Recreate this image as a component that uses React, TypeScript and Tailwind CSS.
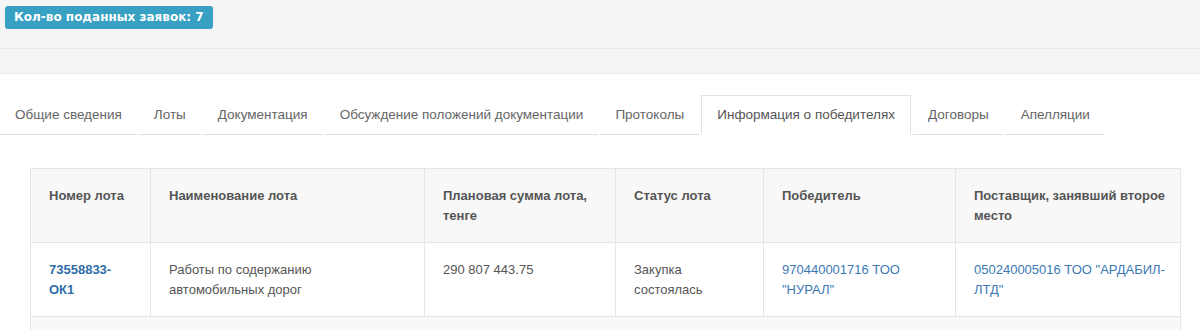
import React from "react";

const tabs = [
  "Общие сведения",
  "Лоты",
  "Документация",
  "Обсуждение положений документации",
  "Протоколы",
  "Информация о победителях",
  "Договоры",
  "Апелляции",
];

export default function App() {
  const active = 5;
  return (
    <div className="w-[1200px] h-[330px] overflow-hidden bg-white font-['Liberation_Sans',Arial,sans-serif] text-[13px] text-[#555]">
      <div className="h-[49px] bg-[#f5f5f5] border-b border-[#e8e8e8] pl-[5px] pt-[6px]">
        <span className="inline-block rounded-[3px] bg-[#37a0c3] px-[9px] h-[23px] leading-[23px] text-white font-bold text-[12px] font-['DejaVu_Sans',Verdana,sans-serif]">
          Кол-во поданных заявок: 7
        </span>
      </div>
      <div className="h-[25px] bg-[#f5f5f5] border-b border-[#ececec]" />
      <div className="pt-[21px]">
        <ul className="flex">
          {tabs.map((t, i) => (
            <li key={t} className="mr-[2px]">
              <span
                className={
                  i === active
                    ? "block px-[15px] py-[10px] leading-[18px] text-[13.5px] border border-[#e2e2e2] border-b-transparent bg-white text-[#555]"
                    : "block px-[15px] pt-[11px] pb-[10px] leading-[18px] text-[13.5px] border-b border-[#e0e0e0] text-[#666]"
                }
              >
                {t}
              </span>
            </li>
          ))}
        </ul>
      </div>
      <div className="pl-[30px] pr-[20px] pt-[33px]">
        <table className="w-[1150px] border-collapse table-fixed">
          <colgroup>
            <col className="w-[120px]" />
            <col className="w-[274px]" />
            <col className="w-[191px]" />
            <col className="w-[148px]" />
            <col className="w-[192px]" />
            <col className="w-[225px]" />
          </colgroup>
          <thead>
            <tr className="bg-[#f8f8f8]">
              {[
                "Номер лота",
                "Наименование лота",
                "Плановая сумма лота, тенге",
                "Статус лота",
                "Победитель",
                "Поставщик, занявший второе место",
              ].map((h) => (
                <th
                  key={h}
                  className="border border-[#e6e6e6] text-left align-top font-bold text-[#555] leading-[20px] pl-[18px] pr-[14px] pt-[17px] pb-[16px]"
                >
                  {h}
                </th>
              ))}
            </tr>
          </thead>
          <tbody>
            <tr className="bg-white">
              <td className="border border-[#e6e6e6] align-top leading-[20px] pl-[18px] pr-[14px] pt-[17px] pb-[16px]">
                <a className="font-bold text-[#2f6ea8]">73558833-ОК1</a>
              </td>
              <td className="border border-[#e6e6e6] align-top leading-[20px] pl-[18px] pr-[60px] pt-[17px] pb-[16px]">
                Работы по содержанию автомобильных дорог
              </td>
              <td className="border border-[#e6e6e6] align-top leading-[20px] pl-[18px] pr-[14px] pt-[17px] pb-[16px]">
                290 807 443.75
              </td>
              <td className="border border-[#e6e6e6] align-top leading-[20px] pl-[18px] pr-[40px] pt-[17px] pb-[16px]">
                Закупка состоялась
              </td>
              <td className="border border-[#e6e6e6] align-top leading-[20px] pl-[18px] pr-[30px] pt-[17px] pb-[16px]">
                <a className="text-[#3b78b4]">970440001716 ТОО "НУРАЛ"</a>
              </td>
              <td className="border border-[#e6e6e6] align-top leading-[20px] pl-[18px] pr-[14px] pt-[17px] pb-[16px]">
                <a className="text-[#3b78b4]">050240005016 ТОО "АРДАБИЛ-ЛТД"</a>
              </td>
            </tr>
            <tr className="bg-[#f8f8f8]">
              <td colSpan={6} className="border border-[#e6e6e6] h-[40px]" />
            </tr>
          </tbody>
        </table>
      </div>
    </div>
  );
}
